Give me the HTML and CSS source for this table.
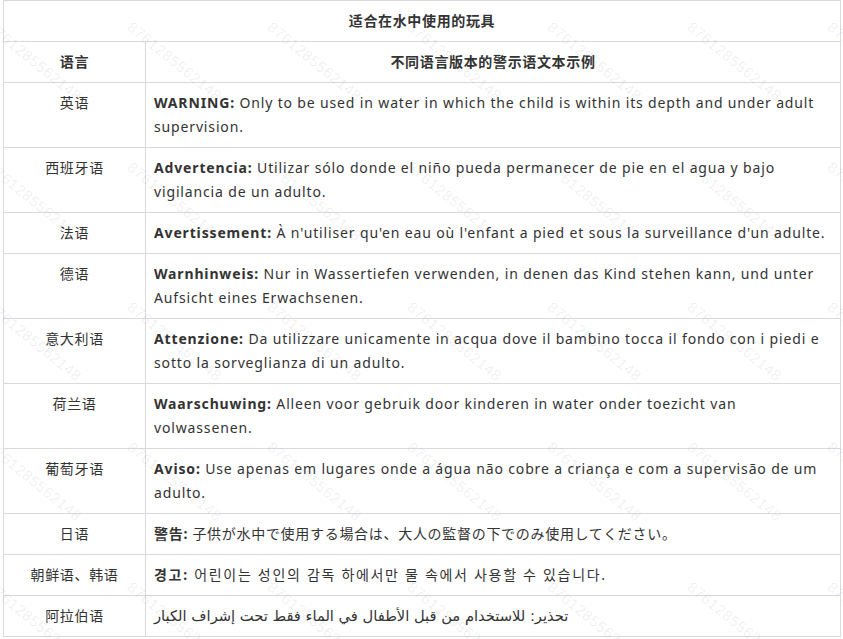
FILE: index.html
```html
<!DOCTYPE html>
<html lang="zh-CN">
<head>
  <meta charset="UTF-8">
  <meta name="viewport" content="width=device-width, initial-scale=1.0">
  <title>适合在水中使用的玩具</title>
  <link rel="stylesheet" href="styles.css">
</head>
<body>
  <div class="page">
    <table class="warn-table">
      <colgroup>
        <col class="col-lang">
        <col class="col-text">
      </colgroup>
      <tr>
        <th colspan="2" class="title">适合在水中使用的玩具</th>
      </tr>
      <tr>
        <th class="lang">语言</th>
        <th>不同语言版本的警示语文本示例</th>
      </tr>
      <tr>
        <td class="lang">英语</td>
        <td><b>WARNING:</b> Only to be used in water in which the child is within its depth and under adult supervision.</td>
      </tr>
      <tr>
        <td class="lang">西班牙语</td>
        <td><b>Advertencia:</b> Utilizar sólo donde el niño pueda permanecer de pie en el agua y bajo vigilancia de un adulto.</td>
      </tr>
      <tr>
        <td class="lang">法语</td>
        <td><b>Avertissement:</b> À n'utiliser qu'en eau où l'enfant a pied et sous la surveillance d'un adulte.</td>
      </tr>
      <tr>
        <td class="lang">德语</td>
        <td><b>Warnhinweis:</b> Nur in Wassertiefen verwenden, in denen das Kind stehen kann, und unter Aufsicht eines Erwachsenen.</td>
      </tr>
      <tr>
        <td class="lang">意大利语</td>
        <td><b>Attenzione:</b> Da utilizzare unicamente in acqua dove il bambino tocca il fondo con i piedi e sotto la sorveglianza di un adulto.</td>
      </tr>
      <tr>
        <td class="lang">荷兰语</td>
        <td><b>Waarschuwing:</b> Alleen voor gebruik door kinderen in water onder toezicht van volwassenen.</td>
      </tr>
      <tr>
        <td class="lang">葡萄牙语</td>
        <td><b>Aviso:</b> Use apenas em lugares onde a água não cobre a criança e com a supervisão de um adulto.</td>
      </tr>
      <tr>
        <td class="lang">日语</td>
        <td class="ja"><b>警告:</b> 子供が水中で使用する場合は、大人の監督の下でのみ使用してください。</td>
      </tr>
      <tr>
        <td class="lang">朝鲜语、韩语</td>
        <td class="ko"><b>경고:</b> 어린이는 성인의 감독 하에서만 물 속에서 사용할 수 있습니다.</td>
      </tr>
      <tr>
        <td class="lang">阿拉伯语</td>
        <td class="ar"><span dir="rtl">تحذير: للاستخدام من قبل الأطفال في الماء فقط تحت إشراف الكبار</span></td>
      </tr>
    </table>

    <!-- watermark -->
    <div class="watermark">
      <span>8761285562148</span><span>8761285562148</span><span>8761285562148</span><span>8761285562148</span><span>8761285562148</span><span>8761285562148</span><span>8761285562148</span>
      <span>8761285562148</span><span>8761285562148</span><span>8761285562148</span><span>8761285562148</span><span>8761285562148</span><span>8761285562148</span><span>8761285562148</span>
      <span>8761285562148</span><span>8761285562148</span><span>8761285562148</span><span>8761285562148</span><span>8761285562148</span><span>8761285562148</span><span>8761285562148</span>
      <span>8761285562148</span><span>8761285562148</span><span>8761285562148</span><span>8761285562148</span><span>8761285562148</span><span>8761285562148</span><span>8761285562148</span>
      <span>8761285562148</span><span>8761285562148</span><span>8761285562148</span><span>8761285562148</span><span>8761285562148</span><span>8761285562148</span><span>8761285562148</span>
    </div>
  </div>
</body>
</html>
```

FILE: styles.css
```css
body {
  margin: 0;
  padding: 0;
  background-color: #fff;
  color: #333;
  font-family: "Noto Sans", "Noto Sans CJK SC", sans-serif;
  font-size: 14px;
}

.page {
  position: relative;
  padding: 0 3px;
  overflow: hidden;
  height: 639px;
}

.warn-table {
  width: 838px;
  border-collapse: collapse;
  table-layout: fixed;
  letter-spacing: 0.85px;
  line-height: 24px;
}

.col-lang {
  width: 142px;
}

.warn-table th,
.warn-table td {
  border: 1px solid #d9dae0;
  padding: 8px 8px;
  vertical-align: top;
  text-align: left;
}

.warn-table th {
  text-align: center;
  font-weight: bold;
  color: #333;
  letter-spacing: 0.65px;
}

.warn-table .lang {
  text-align: center;
  letter-spacing: 0.65px;
}

.warn-table b {
  color: #333;
}

.ja {
  font-family: "Noto Sans", "Noto Sans CJK JP", sans-serif;
}

.warn-table .ja {
  letter-spacing: 0.7px;
}

.ko {
  font-family: "Noto Sans", "Noto Sans CJK KR", sans-serif;
}

.warn-table .ko {
  letter-spacing: 1.7px;
}

.warn-table .ar {
  font-family: "DejaVu Sans", sans-serif;
  font-size: 14.7px;
  letter-spacing: 0;
}

/* Watermark */
.watermark {
  position: absolute;
  top: 0;
  left: -5px;
  display: grid;
  grid-template-columns: repeat(7, 140px);
  grid-auto-rows: 140px;
  pointer-events: none;
  padding-top: 18px;
}

.watermark span {
  display: block;
  font-family: "Liberation Sans", sans-serif;
  font-size: 15px;
  letter-spacing: 0.6px;
  color: rgba(0, 0, 0, 0.07);
  transform-origin: 0 0;
  transform: rotate(39deg);
  white-space: nowrap;
}
```
